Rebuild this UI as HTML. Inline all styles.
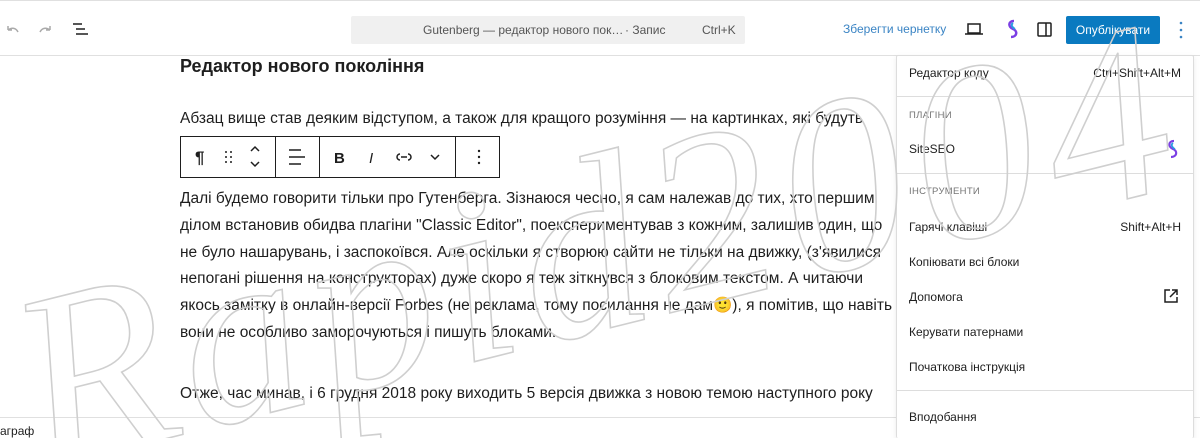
<!DOCTYPE html>
<html style="width:1200px;height:438px;overflow:hidden"><head><meta charset="utf-8">
<style>
*{box-sizing:border-box;margin:0;padding:0}
body{width:1200px;height:438px;overflow:hidden;background:#fff;font-family:"Liberation Sans",sans-serif;color:#1e1e1e;position:relative}
.top{position:absolute;left:0;top:0;width:1200px;height:56px;border-top:1px solid #e0e0e0;border-bottom:1px solid #e0e0e0;background:#fff}
.cmd{position:absolute;left:351px;top:15px;width:394px;height:28px;background:#f0f0f0;border-radius:2px;font-size:12px;color:#555}
.cmd span{position:absolute;top:7px}
.content{position:absolute;left:180px;top:0;width:900px;font-size:15.5px;line-height:27px;white-space:nowrap}
.h{position:absolute;left:180px;top:56px;font-weight:bold;font-size:18px}
.tb{position:absolute;left:180px;top:136px;width:320px;height:42px;border:1px solid #1e1e1e;background:#fff}
.tb .sep{position:absolute;top:0;width:1px;height:40px;background:#1e1e1e}
.menu{position:absolute;left:896px;top:55px;width:298px;height:383px;background:#fff;border:1px solid #ddd;border-bottom:none;border-radius:2px;box-shadow:0 2px 6px rgba(0,0,0,.08);font-size:12px;color:#1e1e1e;overflow:hidden}
.menu .it{position:absolute;left:12px}
.menu .r{position:absolute;right:12px}
.menu .hd{position:absolute;left:12px;font-size:9.5px;color:#757575;letter-spacing:.3px}
.menu .ln{position:absolute;left:0;width:296px;height:1px;background:#ddd}
.status{position:absolute;left:0;top:417px;width:1200px;height:21px;border-top:1px solid #e0e0e0;background:#fff;font-size:12px;padding:6px 0 0 0}
.wm{position:absolute;left:0;top:0;pointer-events:none}
</style></head><body>
<div class="h" style="z-index:2">Редактор нового покоління</div>
<div class="content" style="z-index:2">
<div style="position:absolute;top:105px">Абзац вище став деяким відступом, а також для кращого розуміння — на картинках, які будуть</div>
<div style="position:absolute;top:186px;line-height:26.8px">Далі будемо говорити тільки про Гутенберга. Зізнаюся чесно, я сам належав до тих, хто першим<br>ділом встановив обидва плагіни "Classic Editor", поекспериментував з кожним, залишив один, що<br>не було нашарувань, і заспокоївся. Але оскільки я створюю сайти не тільки на движку, (з'явилися<br>непогані рішення на конструкторах) дуже скоро я теж зіткнувся з блоковим текстом. А читаючи<br>якось замітку в онлайн-версії Forbes (не реклама, тому посилання не дам🙂), я помітив, що навіть<br>вони не особливо заморочуються і пишуть блоками.</div>
<div style="position:absolute;top:380px">Отже, час минав, і 6 грудня 2018 року виходить 5 версія движка з новою темою наступного року</div>
</div>
<div class="tb" style="z-index:3">
<svg width="320" height="40" style="position:absolute;left:0;top:0" fill="none" stroke="#1e1e1e" stroke-width="1.5">
<text x="14" y="26" font-size="17" font-weight="bold" fill="#1e1e1e" stroke="none" font-family="Liberation Sans">¶</text>
<g fill="#1e1e1e" stroke="none"><circle cx="45" cy="15" r="1"/><circle cx="50" cy="15" r="1"/><circle cx="45" cy="20" r="1"/><circle cx="50" cy="20" r="1"/><circle cx="45" cy="25" r="1"/><circle cx="50" cy="25" r="1"/></g>
<path d="M70 14l4-4 4 4M70 25l4 4 4-4"/>
<path d="M108 13h12M108 20h16M108 27h12"/>
<text x="153" y="26" font-size="15" font-weight="bold" fill="#1e1e1e" stroke="none" font-family="Liberation Sans">B</text>
<text x="188" y="26" font-size="15" font-style="italic" fill="#1e1e1e" stroke="none" font-family="Liberation Sans">I</text>
<path d="M219 17a3 3 0 0 0 0 6M227 17a3 3 0 0 1 0 6M220 20h6"/>
<path d="M250 18l4 4 4-4"/>
<g fill="#1e1e1e" stroke="none"><circle cx="298" cy="14" r="1.2"/><circle cx="298" cy="20" r="1.2"/><circle cx="298" cy="26" r="1.2"/></g>
</svg>
<div class="sep" style="left:94px"></div><div class="sep" style="left:138px"></div><div class="sep" style="left:274px"></div>
</div>
<div class="top" style="z-index:4">
<svg width="100" height="55" style="position:absolute;left:0;top:0" fill="none" stroke-width="1.5">
<path d="M18 32c-2-4-6-5-10-2M8 30l0-4M8 30l4 0" stroke="#aaa" transform="translate(0,-1)"/>
<path d="M40 32c2-4 6-5 10-2M50 30l0-4M50 30l-4 0" stroke="#aaa" transform="translate(0,-1)"/>
<path d="M73 23h9M76 28h9M76 33h12" stroke="#1e1e1e"/>
</svg>
<div class="cmd"><span style="left:72px">Gutenberg — редактор нового пок…</span><span style="left:274px">· Запис</span><span style="left:351px">Ctrl+K</span></div>
<div style="position:absolute;left:843px;top:21px;font-size:12px;color:#3a84c4">Зберегти чернетку</div>
<svg width="220" height="55" style="position:absolute;left:960px;top:0" fill="none" stroke="#1e1e1e" stroke-width="1.5">
<path d="M8 23h12v9H8zM5 33h18"/>
<path d="M54 20c-6 0-6 6-1 8s4 8-2 8" stroke="#7b3fe4" stroke-width="2.5"/>
<path d="M53 22c-3 2 0 5 2 6" stroke="#2b9be0" stroke-width="2"/>
<rect x="78" y="22" width="13" height="13" rx="1"/><path d="M86 22v13"/>
</svg>
<div style="position:absolute;left:1066px;top:15px;width:94px;height:28px;background:#0a7ac0;border-radius:2px;color:#fff;font-size:12px;text-align:center;line-height:28px">Опублікувати</div>
<svg width="10" height="20" style="position:absolute;left:1177px;top:19px" fill="#3a84c4"><circle cx="4" cy="3" r="1.3"/><circle cx="4" cy="10" r="1.3"/><circle cx="4" cy="17" r="1.3"/></svg>
</div>
<div class="status" style="z-index:4">аграф</div>
<div class="menu" style="z-index:5">
<div class="it" style="top:10px">Редактор коду</div><div class="r" style="top:10px">Ctrl+Shift+Alt+M</div>
<div class="ln" style="top:40px"></div>
<div class="hd" style="top:54px">ПЛАГІНИ</div>
<div class="it" style="top:86px">SiteSEO</div>
<svg width="14" height="20" style="position:absolute;right:14px;top:83px" fill="none"><path d="M9 2c-6 0-6 6-1 8s4 8-2 8" stroke="#7b3fe4" stroke-width="2.2"/><path d="M8 4c-3 2 0 5 2 6" stroke="#2b9be0" stroke-width="1.8"/></svg>
<div class="ln" style="top:117px"></div>
<div class="hd" style="top:130px">ІНСТРУМЕНТИ</div>
<div class="it" style="top:164px">Гарячі клавіші</div><div class="r" style="top:164px">Shift+Alt+H</div>
<div class="it" style="top:199px">Копіювати всі блоки</div>
<div class="it" style="top:234px">Допомога</div>
<svg width="16" height="16" style="position:absolute;right:14px;top:232px" fill="none" stroke="#1e1e1e" stroke-width="1.5"><path d="M7 2H2v12h12V9M9 2h5v5M14 2L7 9"/></svg>
<div class="it" style="top:269px">Керувати патернами</div>
<div class="it" style="top:304px">Початкова інструкція</div>
<div class="ln" style="top:334px"></div>
<div class="it" style="top:354px">Вподобання</div>
</div>
<svg class="wm" width="1200" height="438" style="z-index:10">
<text x="40" y="470" transform="rotate(-14 40 470)" font-family="Liberation Serif,serif" font-style="italic" font-size="250" fill="none" stroke="#cfcfcf" stroke-width="1.6" textLength="1180" lengthAdjust="spacing">Rapid2004</text>
</svg>
</body></html>
